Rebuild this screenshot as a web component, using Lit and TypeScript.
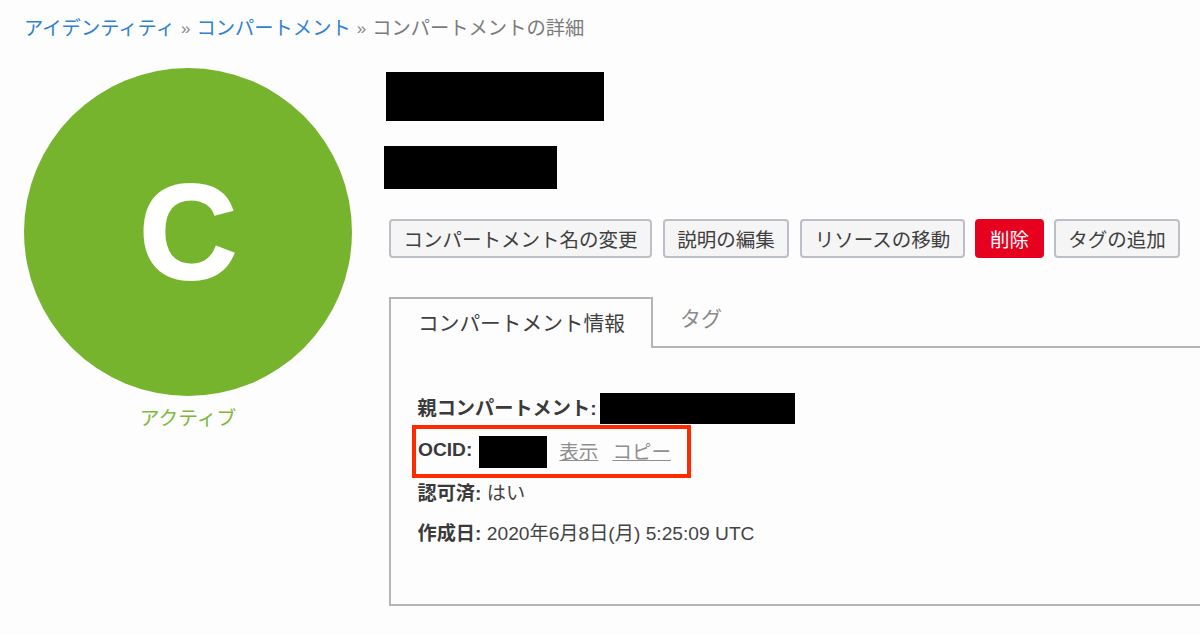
import { LitElement, html, css } from "lit";
import { customElement } from "lit/decorators.js";

@customElement("app-root")
export class AppRoot extends LitElement {
  static styles = css`
    :host {
      display: block;
      width: 1200px;
      height: 635px;
      overflow: hidden;
      background: #fdfdfd;
      font-family: "Liberation Sans", "Noto Sans CJK JP", sans-serif;
      color: #3c3c3c;
    }
    .crumbs {
      display: flex;
      align-items: center;
      height: 24px;
      padding: 17px 0 0 24px;
      font-size: 19.3px;
      line-height: 24px;
      color: #7b7b7b;
      white-space: nowrap;
    }
    .crumbs a { color: #2f82d0; text-decoration: none; }
    .crumbs .sep { font-size: 17px; margin: 0 6px 0 6px; color: #888; }
    .main {
      display: flex;
      padding: 27px 0 0 24px;
    }
    .side {
      flex: none;
      width: 328px;
      margin-right: 37px;
      display: flex;
      flex-direction: column;
      align-items: center;
    }
    .avatar {
      width: 328px;
      height: 328px;
      border-radius: 50%;
      background: #76b42d;
      color: #fff;
      display: flex;
      align-items: center;
      justify-content: center;
      font-size: 136px;
      font-weight: 700;
      line-height: 1;
      -webkit-text-stroke: 2px #fff;
    }
    .status {
      margin-top: 10px;
      font-size: 19.8px;
      line-height: 24px;
      color: #7fb93c;
    }
    .content { flex: none; width: 811px; }
    .mask { background: #000; }
    .mask-a { width: 218px; height: 49px; margin: 4px 0 0 -3px; }
    .mask-b { width: 173px; height: 43px; margin: 25px 0 0 -5px; }
    .actions {
      display: flex;
      margin-top: 30px;
    }
    .btn {
      box-sizing: border-box;
      height: 39px;
      display: flex;
      align-items: center;
      justify-content: center;
      border: 2px solid #bbc0c6;
      border-radius: 4px;
      background: #f5f5f5;
      font-size: 19.5px;
      color: #3f3f3f;
      white-space: nowrap;
    }
    .btn.w1 { width: 263px; }
    .btn.w2 { width: 126px; margin-left: 11px; }
    .btn.w3 { width: 165px; margin-left: 11px; }
    .btn.w4 { width: 69px; margin-left: 10px; }
    .btn.w5 { width: 126px; margin-left: 10px; }
    .btn.danger { background: #e8001f; border-color: #e8001f; color: #fff; }
    .tabs {
      display: flex;
      margin-top: 39px;
      height: 51px;
    }
    .tab {
      box-sizing: border-box;
      width: 264px;
      height: 51px;
      border: 2px solid #b5b5b5;
      border-bottom: none;
      background: #fdfdfd;
      font-size: 20.7px;
      line-height: 24px;
      padding: 13px 0 0 27px;
      color: #3f3f3f;
      white-space: nowrap;
    }
    .tab-rest {
      flex: 1;
      border-bottom: 2px solid #b5b5b5;
      font-size: 21px;
      line-height: 24px;
      padding: 10px 0 0 27px;
      color: #8a8a8a;
    }
    .panel {
      box-sizing: border-box;
      height: 258px;
      border-left: 2px solid #b5b5b5;
      border-bottom: 2px solid #b5b5b5;
      padding-top: 45px;
      font-size: 19.2px;
      line-height: 24px;
      color: #444;
      display: flex;
      flex-direction: column;
      align-items: flex-start;
    }
    .row {
      display: flex;
      align-items: center;
      height: 31px;
      margin-left: 26.5px;
      white-space: nowrap;
    }
    .row b { color: #3a3a3a; font-weight: 700; }
    .mask-parent { width: 195px; height: 31px; margin-left: 3px; }
    .ocid {
      box-sizing: border-box;
      width: 279px;
      height: 53px;
      margin: 1px 0 0 21px;
      padding-left: 2px;
      border: 4px solid #ff2b00;
      display: flex;
      align-items: center;
      white-space: nowrap;
    }
    .ocid b { color: #3a3a3a; position: relative; top: -2px; }
    .mask-ocid { width: 68px; height: 32px; margin: 0 12px 0 7px; }
    .ocid a {
      color: #8f8f8f;
      text-decoration: underline;
      font-size: 19.5px;
      margin-right: 14px;
    }
    .auth { margin-top: 4px; height: 24px; }
    .date { margin-top: 16px; height: 24px; }
  `;

  render() {
    return html`
      <nav class="crumbs">
        <a href="#">アイデンティティ</a><span class="sep">»</span>
        <a href="#">コンパートメント</a><span class="sep">»</span>
        <span>コンパートメントの詳細</span>
      </nav>
      <div class="main">
        <div class="side">
          <div class="avatar">C</div>
          <div class="status">アクティブ</div>
        </div>
        <div class="content">
          <div class="mask mask-a"></div>
          <div class="mask mask-b"></div>
          <div class="actions">
            <div class="btn w1">コンパートメント名の変更</div>
            <div class="btn w2">説明の編集</div>
            <div class="btn w3">リソースの移動</div>
            <div class="btn w4 danger">削除</div>
            <div class="btn w5">タグの追加</div>
          </div>
          <div class="tabs">
            <div class="tab">コンパートメント情報</div>
            <div class="tab-rest">タグ</div>
          </div>
          <div class="panel">
            <div class="row"><b>親コンパートメント:</b><div class="mask mask-parent"></div></div>
            <div class="ocid">
              <b>OCID:</b><div class="mask mask-ocid"></div>
              <a href="#">表示</a><a href="#">コピー</a>
            </div>
            <div class="row auth"><b>認可済:</b>&nbsp;はい</div>
            <div class="row date"><b>作成日:</b>&nbsp;2020年6月8日(月) 5:25:09 UTC</div>
          </div>
        </div>
      </div>
    `;
  }
}
